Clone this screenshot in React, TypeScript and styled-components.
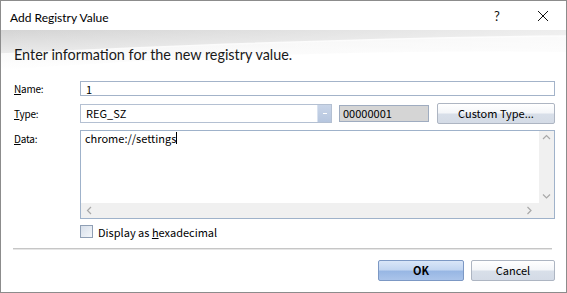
import React from "react";
import styled, { createGlobalStyle } from "styled-components";

const Global = createGlobalStyle`
  html, body { margin: 0; padding: 0; background: #fff; }
  * { box-sizing: border-box; }
`;

const UI = `"Noto Sans CJK JP", "Liberation Sans", sans-serif`;
const SEGOE = `Lato, "Liberation Sans", sans-serif`;

const Window = styled.div`
  width: 567px;
  height: 293px;
  border: 1px solid #8c8c8c;
  background: #fff;
  display: flex;
  flex-direction: column;
  overflow: hidden;
`;

const TitleBar = styled.div`
  height: 29px;
  display: flex;
  align-items: center;
  padding-left: 9px;
  font-family: ${SEGOE};
  font-size: 12px;
  color: #000;
  flex-shrink: 0;
`;

const Title = styled.div`
  flex: 1;
  padding-top: 3px;
`;

const TitleButton = styled.div`
  width: 46px;
  height: 29px;
  display: flex;
  align-items: center;
  justify-content: center;
  font-family: ${SEGOE};
  font-size: 13px;
  color: #111;
`;

const Header = styled.div`
  position: relative;
  height: 51px;
  padding: 16px 0 0 13px;
  flex-shrink: 0;
`;

const Swoosh = styled.svg`
  position: absolute;
  left: 0;
  top: 0;
`;

const HeaderText = styled.div`
  position: relative;
  font-family: ${SEGOE};
  font-size: 14.4px;
  line-height: 18px;
  color: #1a1a1a;
`;

const Form = styled.div`
  display: grid;
  grid-template-columns: 66px 1fr;
  row-gap: 7px;
  padding: 0 11px 0 13px;
  font-family: ${UI};
  font-size: 11px;
  color: #000;
`;

const Label = styled.div<{ $top?: boolean }>`
  font-size: 10px;
  display: flex;
  align-items: ${(p) => (p.$top ? "flex-start" : "center")};
  padding-top: ${(p) => (p.$top ? "1px" : "0")};
  letter-spacing: -0.2px;
  u { text-decoration: underline; text-underline-offset: 1px; }
`;

const TextBox = styled.div`
  height: 15px;
  border: 1px solid #a3b3c9;
  background: #fff;
  display: flex;
  align-items: center;
  padding-left: 5px;
  font-size: 11px;
`;

const TypeRow = styled.div`
  display: flex;
  align-items: center;
  height: 20px;
`;

const Combo = styled.div`
  width: 252px;
  height: 19px;
  border: 1px solid #b4c0d2;
  background: #fff;
  display: flex;
  align-items: stretch;
`;

const ComboText = styled.div`
  flex: 1;
  padding-left: 5px;
  display: flex;
  align-items: center;
`;

const ComboButton = styled.div`
  width: 14px;
  background: linear-gradient(#c9d5e8, #b6c6df);
  border-left: 1px solid #d9e2ef;
  display: flex;
  align-items: center;
  justify-content: center;
  &::after {
    content: "";
    width: 4px;
    height: 1px;
    background: #fff;
  }
`;

const HexField = styled.div`
  width: 90px;
  height: 17px;
  margin-left: 7px;
  border: 1px solid #9facc0;
  background: #d5d5d5;
  padding-left: 3px;
  display: flex;
  align-items: center;
`;

const Button = styled.div<{ $w: number; $default?: boolean }>`
  width: ${(p) => p.$w}px;
  height: 21px;
  border: 1px solid ${(p) => (p.$default ? "#7c98c4" : "#adb5c2")};
  border-radius: 2px;
  background: ${(p) =>
    p.$default
      ? "linear-gradient(#d9e6f8 0%, #c3d6f1 45%, #98b7e4 55%, #aac4ea 100%)"
      : "linear-gradient(#ffffff 0%, #f4f6f9 45%, #d8dfe9 55%, #d4dbe6 100%)"};
  display: flex;
  align-items: center;
  justify-content: center;
  font-weight: ${(p) => (p.$default ? 700 : 400)};
  font-size: 11px;
  padding-bottom: 1px;
`;

const CustomButton = styled(Button)`
  margin-left: 8px;
`;

const DataBox = styled.div`
  height: 89px;
  border: 1px solid #9fb2ca;
  background: #fff;
  display: grid;
  grid-template-columns: 1fr 15px;
  grid-template-rows: 1fr 15px;
`;

const DataText = styled.div`
  padding: 0 0 0 4px;
  display: flex;
  align-items: flex-start;
  line-height: 14px;
`;

const Caret = styled.span`
  display: inline-block;
  width: 1px;
  height: 12px;
  background: #000;
  margin-top: 1px;
`;

const VScroll = styled.div`
  background: #f0f0f0;
  display: flex;
  flex-direction: column;
  justify-content: space-between;
  align-items: center;
  padding: 3px 0;
  color: #a6a6a6;
`;

const HScroll = styled.div`
  background: #f0f0f0;
  display: flex;
  justify-content: space-between;
  align-items: center;
  padding: 0 6px 0 5px;
  color: #a6a6a6;
`;

const Corner = styled.div`
  background: #f0f0f0;
`;

const CheckRow = styled.div`
  display: flex;
  align-items: center;
  height: 13px;
  gap: 5px;
  margin-top: -1px;
  u { text-decoration: underline; text-underline-offset: 1px; }
`;

const CheckBox = styled.div`
  width: 13px;
  height: 13px;
  border: 1px solid #8f9fb5;
  background: linear-gradient(135deg, #d7dfea, #f3f6fa);
`;

const Separator = styled.div`
  margin: 10px 14px 0 12px;
  height: 2px;
  border-top: 1px solid #c6c6c6;
  border-bottom: 1px solid #e6e6e6;
`;

const Footer = styled.div`
  display: flex;
  justify-content: flex-end;
  gap: 7px;
  padding: 10px 11px 0 0;
  font-family: ${UI};
  color: #000;
`;

const Chevron = ({ dir }: { dir: "up" | "down" | "left" | "right" }) => {
  const paths: Record<string, string> = {
    up: "M1 5 L4.5 1.5 L8 5",
    down: "M1 1.5 L4.5 5 L8 1.5",
    left: "M5 1 L1.5 4.5 L5 8",
    right: "M1.5 1 L5 4.5 L1.5 8",
  };
  const horiz = dir === "left" || dir === "right";
  return (
    <svg width={horiz ? 7 : 9} height={horiz ? 9 : 7} viewBox={horiz ? "0 0 7 9" : "0 0 9 7"}>
      <path d={paths[dir]} fill="none" stroke="#a8a8a8" strokeWidth="1.2" />
    </svg>
  );
};

export default function App() {
  return (
    <>
      <Global />
      <Window>
        <TitleBar>
          <Title>Add Registry Value</Title>
          <TitleButton>?</TitleButton>
          <TitleButton>
            <svg width="12" height="12" viewBox="0 0 12 12">
              <path d="M1 1 L11 11 M11 1 L1 11" stroke="#111" strokeWidth="1" />
            </svg>
          </TitleButton>
        </TitleBar>
        <Header>
          <Swoosh width="565" height="51" viewBox="0 0 565 51">
            <defs>
              <linearGradient id="g1" x1="0" y1="0" x2="0" y2="1">
                <stop offset="0" stopColor="#d4d4d4" />
                <stop offset="1" stopColor="#ebebeb" />
              </linearGradient>
              <linearGradient id="g2" x1="0" y1="0" x2="0" y2="1">
                <stop offset="0" stopColor="#f1f1f1" />
                <stop offset="1" stopColor="#ffffff" />
              </linearGradient>
              <linearGradient id="fadeR" x1="0" y1="0" x2="1" y2="0">
                <stop offset="0" stopColor="#fff" stopOpacity="0" />
                <stop offset="1" stopColor="#fff" stopOpacity="0.6" />
              </linearGradient>
            </defs>
            <rect x="0" y="0" width="565" height="51" fill="#fff" />
            <path d="M0 0 H565 V22 Q300 18 0 40 Z" fill="url(#g2)" />
            <path d="M0 0 H565 V6 Q330 8 0 24 Z" fill="url(#g1)" />
            <path d="M0 24 Q330 8 565 6" fill="none" stroke="#fafafa" strokeWidth="1.5" />
            <rect x="0" y="0" width="565" height="51" fill="url(#fadeR)" />
          </Swoosh>
          <HeaderText>Enter information for the new registry value.</HeaderText>
        </Header>
        <Form>
          <Label>
            <span><u>N</u>ame:</span>
          </Label>
          <TextBox>1</TextBox>

          <Label>
            <span><u>T</u>ype:</span>
          </Label>
          <TypeRow>
            <Combo>
              <ComboText>REG_SZ</ComboText>
              <ComboButton />
            </Combo>
            <HexField>00000001</HexField>
            <CustomButton $w={118}>Custom Type...</CustomButton>
          </TypeRow>

          <Label $top>
            <span><u>D</u>ata:</span>
          </Label>
          <DataBox>
            <DataText>
              chrome://settings<Caret />
            </DataText>
            <VScroll>
              <Chevron dir="up" />
              <Chevron dir="down" />
            </VScroll>
            <HScroll>
              <Chevron dir="left" />
              <Chevron dir="right" />
            </HScroll>
            <Corner />
          </DataBox>

          <div />
          <CheckRow>
            <CheckBox />
            <span>Display as <u>h</u>exadecimal</span>
          </CheckRow>
        </Form>
        <Separator />
        <Footer>
          <Button $w={86} $default>OK</Button>
          <Button $w={84}>Cancel</Button>
        </Footer>
      </Window>
    </>
  );
}
